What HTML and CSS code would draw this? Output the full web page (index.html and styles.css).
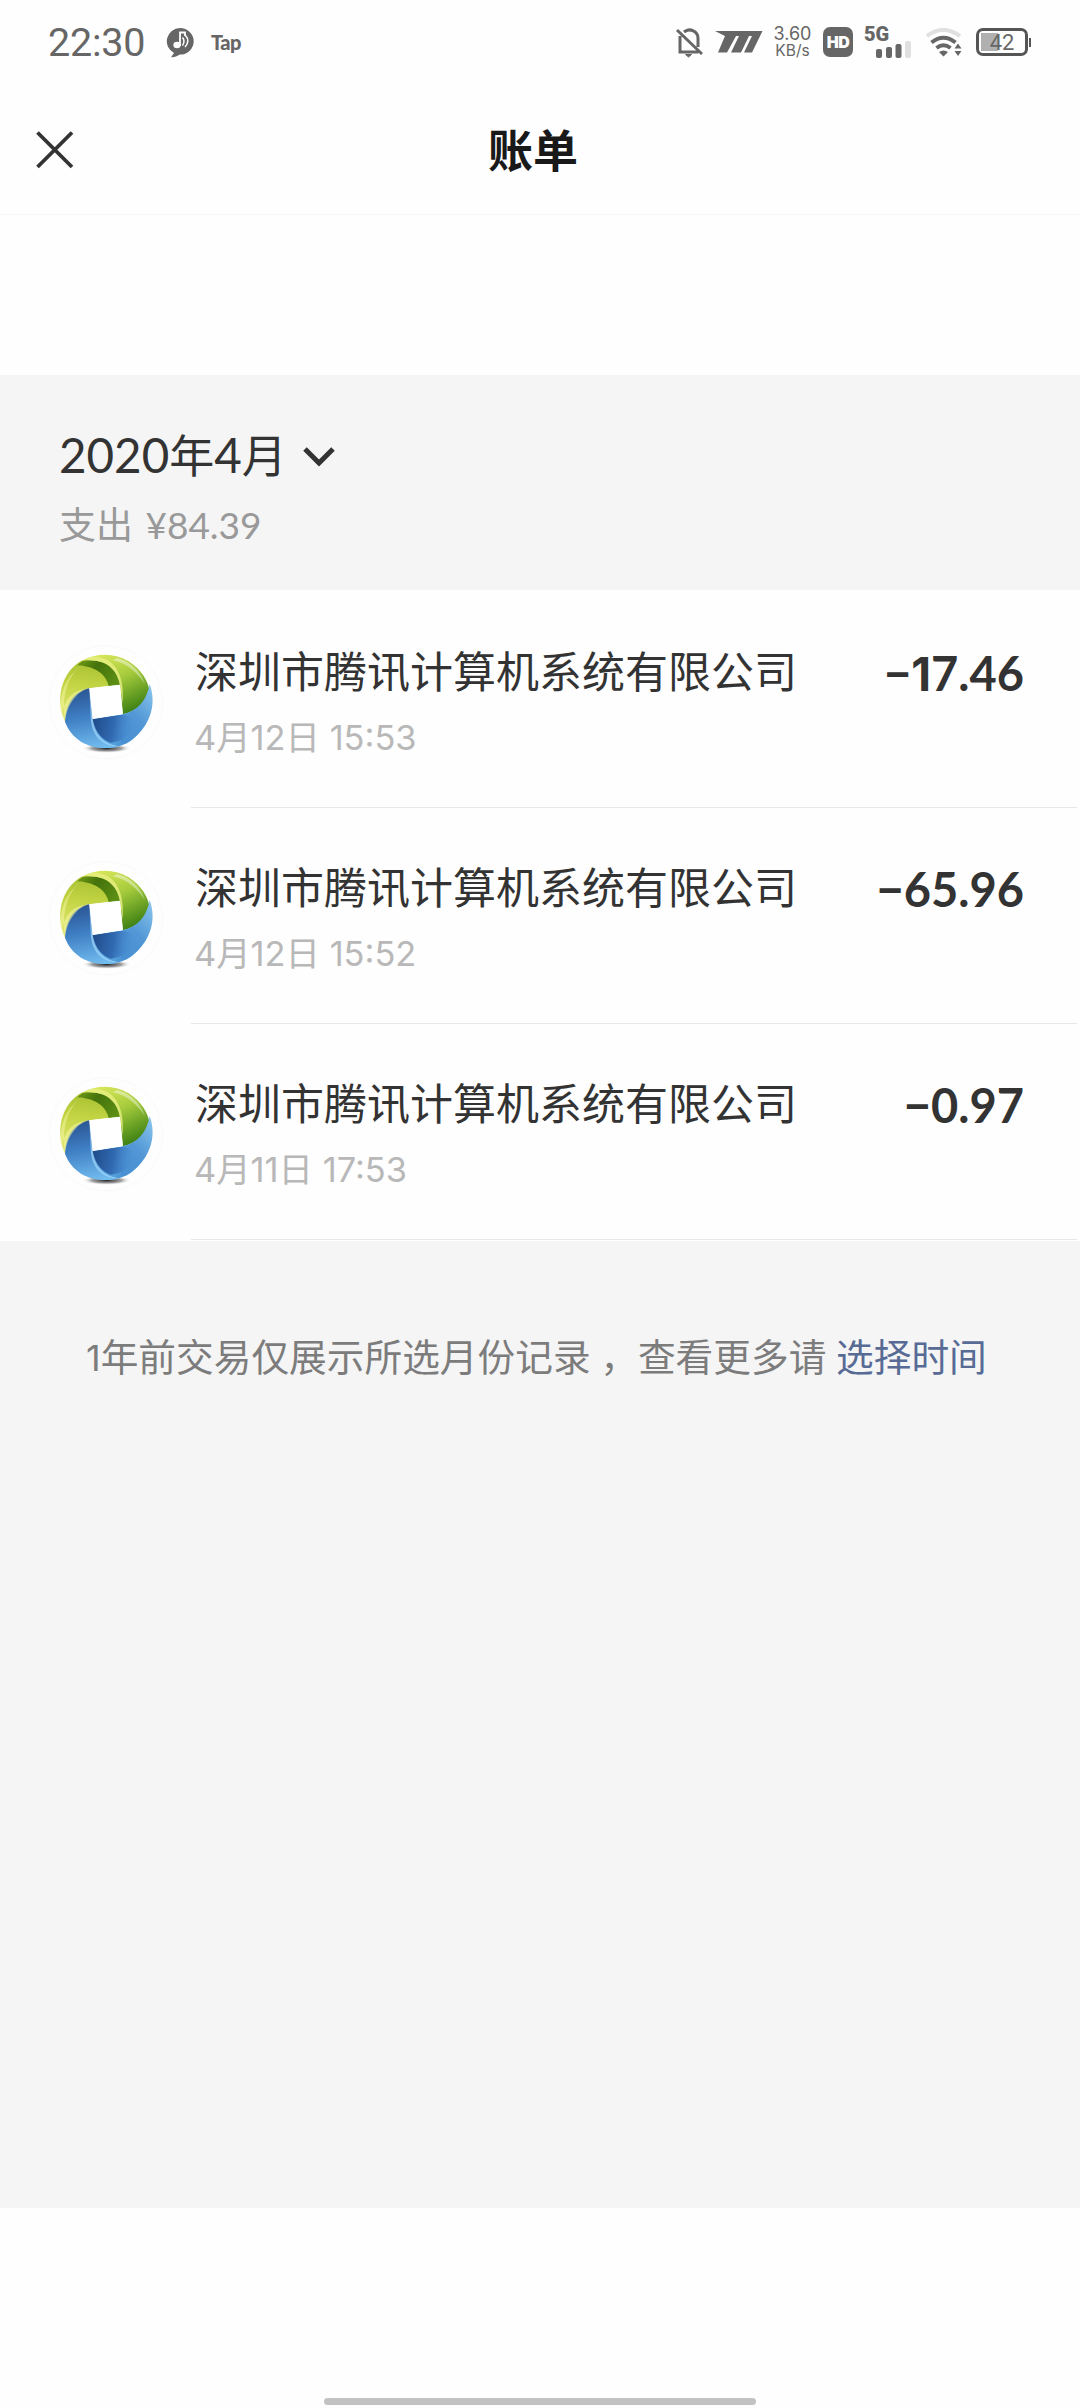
FILE: index.html
```html
<!DOCTYPE html>
<html lang="zh-CN">
<head>
<meta charset="utf-8">
<title>账单</title>
<link rel="stylesheet" href="styles.css">
</head>
<body>
<svg class="defs" width="0" height="0" aria-hidden="true">
  <defs>
    <linearGradient id="g1" x1="0.4" y1="0" x2="0.3" y2="1"><stop offset="0" stop-color="#a3bd2c"/><stop offset=".45" stop-color="#c3d545"/><stop offset="1" stop-color="#e6e878"/></linearGradient>
    <linearGradient id="g2" x1="0" y1="0.2" x2="1" y2="0.7"><stop offset="0" stop-color="#6b9716"/><stop offset=".4" stop-color="#44720c"/><stop offset="1" stop-color="#5d8f14"/></linearGradient>
    <linearGradient id="g3" x1="0.2" y1="0" x2="0.75" y2="1"><stop offset="0" stop-color="#dce85c"/><stop offset=".45" stop-color="#a5cb3c"/><stop offset="1" stop-color="#347a10"/></linearGradient>
    <linearGradient id="b1" x1="1" y1="0" x2="0.15" y2="0.9"><stop offset="0" stop-color="#8cc8ee"/><stop offset=".45" stop-color="#5297d6"/><stop offset=".8" stop-color="#4890d2"/><stop offset="1" stop-color="#62aee6"/></linearGradient>
    <linearGradient id="b2" x1="0.5" y1="0" x2="0.65" y2="1"><stop offset="0" stop-color="#2b5796"/><stop offset=".45" stop-color="#3f7fc4"/><stop offset="1" stop-color="#72bdf0"/></linearGradient>
    <linearGradient id="b3" x1="0" y1="0.4" x2="1" y2="0.5"><stop offset="0" stop-color="#1f4a8a"/><stop offset=".5" stop-color="#2c62aa" stop-opacity=".85"/><stop offset="1" stop-color="#4a90d2" stop-opacity="0"/></linearGradient>
    <radialGradient id="sh"><stop offset="0" stop-color="#222"/><stop offset=".6" stop-color="#777" stop-opacity=".7"/><stop offset="1" stop-color="#fff" stop-opacity="0"/></radialGradient>
    <symbol id="logo" viewBox="0 0 390 390">
      <circle cx="198" cy="187" r="170" fill="none" stroke="#fafafa" stroke-width="3"/>
      <ellipse cx="200" cy="325" rx="74" ry="14" fill="url(#sh)"/>
      <path d="M75 245C45 180 62 95 128 61L170 50L240 134L148 145C112 154 82 190 75 245Z" fill="url(#g1)"/>
      <path d="M112 76C136 52 178 46 208 64C230 80 237 108 240 134L206 138C200 112 178 80 112 76Z" fill="url(#g2)"/>
      <path d="M126 62C170 38 225 38 266 64C303 88 324 121 330 158C318 190 292 211 249 223L240 134C231 91 202 53 126 62Z" fill="url(#g3)"/>
      <path d="M126 62C202 53 231 91 240 134L248 190C254 121 235 54 164 50Z" fill="#e9ef83" opacity=".8"/>
      <path d="M218 61C264 70 294 101 315 132C303 97 270 62 232 54Z" fill="#fff" opacity=".42"/>
      <path d="M329 132C346 178 339 229 305 271C278 307 238 326 198 324L155 285L158 237L249 223C295 211 320 181 329 132Z" fill="url(#b1)"/>
      <path d="M158 237L248 224C300 232 298 290 213 308C186 300 166 277 158 237Z" fill="url(#b3)"/>
      <path d="M148 145L158 237C163 283 191 314 239 319C167 337 98 309 75 245C77 191 105 152 148 145Z" fill="url(#b2)"/>
      <path d="M148 145L158 237C163 283 191 314 239 319C184 321 153 283 152 231Z" fill="#a7dcfb" opacity=".65"/>
      <path d="M62 215C56 126 113 72 165 57C100 76 60 137 75 245C82 190 112 154 148 145C104 148 79 169 68 212Z" fill="#f4f6a0" opacity=".55"/>
      <path d="M148 145L240 134L248 222L158 237Z" fill="#fff"/>
    </symbol>
  </defs>
</svg>

<div class="status">
  <div class="clock">22:30</div>
  <svg class="music" width="30" height="32" viewBox="0 0 30 32"><path d="M14 1a13.7 13.3 0 0 1 0 26.600C11 29.500 8 30.500 5 30.200L8 26A13.700 13.300 0 0 1 14 1Z" fill="#666"/><path d="M14 19V5.500H19V9" fill="none" stroke="#fff" stroke-width="1.800"/><ellipse cx="11" cy="18" rx="3.600" ry="3.300" fill="#fff"/><path d="M16.500 10.500q3 3.500 0 8M19.500 8.500q5 5.500-.5 11.500" fill="none" stroke="#fff" stroke-width="1.500"/></svg>
  <div class="tap">Tap</div>
  <div class="tray">
    <svg width="28" height="32" viewBox="0 0 28 32" fill="none" stroke="#666" stroke-width="3"><path d="M5 10V26H23.500M9 6C15 1 23 6 23 12V21M2 4 27 28"/><path d="M9.500 5q3-3 7 0M10.500 28.500h6l-3 2.500z" fill="#666" stroke-width="1"/></svg>
    <svg width="48" height="24" viewBox="0 0 48 24" fill="#666"><path d="M0 1H47.500L37 22.500H29L37 6H34L26 22.500H16L24 6H21L12 22.500H3L10 6Z"/></svg>
    <div class="speed"><span>3.60</span><span>KB/s</span></div>
    <div class="hd">HD</div>
    <div class="cell"><span>5G</span><svg width="36" height="17" viewBox="0 0 36 17" fill="#666"><rect x="0" y="8" width="6" height="9" rx="2"/><rect x="10" y="6" width="6" height="11" rx="2"/><rect x="19.500" y="3" width="6" height="14" rx="2"/><rect x="29" y="0" width="6" height="17" rx="2" fill="#e0e0e0"/></svg></div>
    <svg class="wifi" width="36" height="29" viewBox="0 0 36 29" fill="none" stroke-width="4"><path d="M1 8Q17-4 34 8" stroke="#e0e0e0"/><path d="M5.500 14.500Q17.500 5 29.500 14.500M10.500 20Q17.500 14.500 24.500 20" stroke="#666"/><path d="M13 24q4.500-3 9 0l-4.500 4.500zM28.500 20.500h7l-3.500-5zM28.500 23h7l-3.500 5z" fill="#666"/></svg>
    <div class="battery"><div class="case"><span>42</span></div><i></i></div>
  </div>
</div>

<header class="nav">
  <svg width="38" height="38" viewBox="0 0 38 38" stroke="#333" stroke-width="3.800"><path d="M1.500 1.500 36 36M36 1.500 1.500 36"/></svg>
  <h1>账单</h1>
</header>

<main>
  <section class="summary">
    <div class="month"><span><b class="num">2020</b>年<b class="num">4</b>月</span><svg width="32" height="20" viewBox="0 0 32 20" fill="none" stroke="#333" stroke-width="5"><path d="M2 2 16 16 30 2"/></svg></div>
    <div class="spent">支出 <span>¥84.39</span></div>
  </section>
  <section class="list">
    <div class="row"><svg class="logo"><use href="#logo"/></svg><div class="info"><div class="line"><span class="name">深圳市腾讯计算机系统有限公司</span><span class="amount"><i>−</i><span class="one">1</span>7.46</span></div><div class="date">4月12日 15:53</div></div></div>
    <div class="row"><svg class="logo"><use href="#logo"/></svg><div class="info"><div class="line"><span class="name">深圳市腾讯计算机系统有限公司</span><span class="amount"><i>−</i>65.96</span></div><div class="date">4月12日 15:52</div></div></div>
    <div class="row"><svg class="logo"><use href="#logo"/></svg><div class="info"><div class="line"><span class="name">深圳市腾讯计算机系统有限公司</span><span class="amount"><i>−</i>0.97</span></div><div class="date">4月11日 17:53</div></div></div>
  </section>
  <p class="more"><span class="lead">1</span>年前交易仅展示所选月份记录 ，查看更多请 <a>选择时间</a></p>
</main>
<footer><div class="home"></div></footer>
</body>
</html>
```
FILE: styles.css
```css
* { box-sizing: border-box; }
body { margin: 0; width: 1080px; height: 2408px; background: #fefefe; color: #333; font-family: Lato, "Noto Sans CJK SC", sans-serif; display: flex; flex-direction: column; overflow: hidden; }
.defs { position: absolute; }

.status { height: 84px; padding: 0 49px 0 48px; display: flex; align-items: center; color: #666; flex: none; }
.clock { font: 39.5px/85px Roboto, sans-serif; width: 118px; letter-spacing: -0.2px; }
.music { margin-top: 1px; }
.tap { font: 900 20px/81px Lato, sans-serif; margin-left: 15px; letter-spacing: -0.6px; }
.tray { margin-left: auto; height: 84px; display: flex; align-items: center; }
.tray > svg + svg { margin-left: 12px; }
.speed { width: 39px; margin-left: 10px; display: flex; flex-direction: column; align-items: center; font: 18px/17px Inter, sans-serif; }
.speed span + span { font-size: 15.5px; }
.hd { width: 30px; height: 30px; margin-left: 11px; border-radius: 7px; background: #666; color: #fff; font: 900 16px/31px Inter, sans-serif; text-align: center; letter-spacing: -0.5px; }
.cell { width: 48px; height: 31px; margin-left: 11px; display: grid; grid-template-rows: 14px 17px; }
.cell span { font: 900 20px/15px Roboto, sans-serif; }
.cell svg { justify-self: end; }
.tray .wifi { margin-left: 14px; }
.battery { display: flex; align-items: center; margin-left: 14px; }
.case { width: 52px; height: 28px; border: 3px solid #555; border-radius: 7px; padding: 2px; }
.case span { display: block; height: 18px; background: linear-gradient(90deg, #b0b0b0 17px, transparent 17px); font: 22px/19px Roboto, sans-serif; text-align: center; }
.battery i { width: 2px; height: 9px; background: #555; margin-left: 1px; }

.nav { height: 131px; flex: none; border-bottom: 1px solid #f6f6f6; display: grid; grid-template-columns: 120px 1fr 120px; align-items: center; }
.nav svg { margin: 1px 0 0 36px; }
.nav h1 { margin: 3px 14px 0 0; text-align: center; color: #191919; font-size: 45px; font-weight: 700; line-height: 60px; }

main { margin-top: 160px; height: 1833px; flex: none; background: #f5f5f5; }
.summary { height: 215px; padding: 49px 59px 0; }
.month { display: flex; align-items: center; gap: 16px; height: 62px; font-size: 45px; line-height: 62px; }
.month svg { margin-top: 4px; }
.month .num { font-weight: 400; font-size: 47.500px; }
.spent { font-size: 37px; line-height: 50px; margin-top: 14px; color: #999; }
.spent span { margin-left: 3px; }

.list { background: #fefefe; padding-top: 2px; height: 651px; }
.row { height: 216px; display: flex; padding-left: 40px; }
.logo { width: 130px; height: 130px; margin-top: 48px; }
.info { width: 886px; flex: none; margin-left: 21px; border-bottom: 1px solid #e8e8e8; padding: 50px 53px 0 4px; }
.line { display: flex; justify-content: space-between; height: 62px; line-height: 62px; }
.name { font-size: 43px; margin-top: -1px; }
.amount { font-size: 47px; font-weight: 700; }
.amount i { font-style: normal; font-weight: 900; }
.one { font: 700 46px/1 Inter, sans-serif; }
.date { font-size: 34.4px; line-height: 48px; margin: 10px 0 0 -1px; color: #b8b8b8; font-family: Inter, "Noto Sans CJK SC", sans-serif; }
.more { margin: 88px 0 0 86px; font-size: 37.700px; line-height: 56px; color: #7c7c7c; white-space: nowrap; }
.lead { font: 36px/1 Inter, sans-serif; }
.more a { color: #576b95; }
footer { flex: 1; display: flex; justify-content: center; align-items: flex-end; padding-bottom: 3px; }
.home { width: 432px; height: 7px; border-radius: 4px; background: #c2c2c2; }
```
